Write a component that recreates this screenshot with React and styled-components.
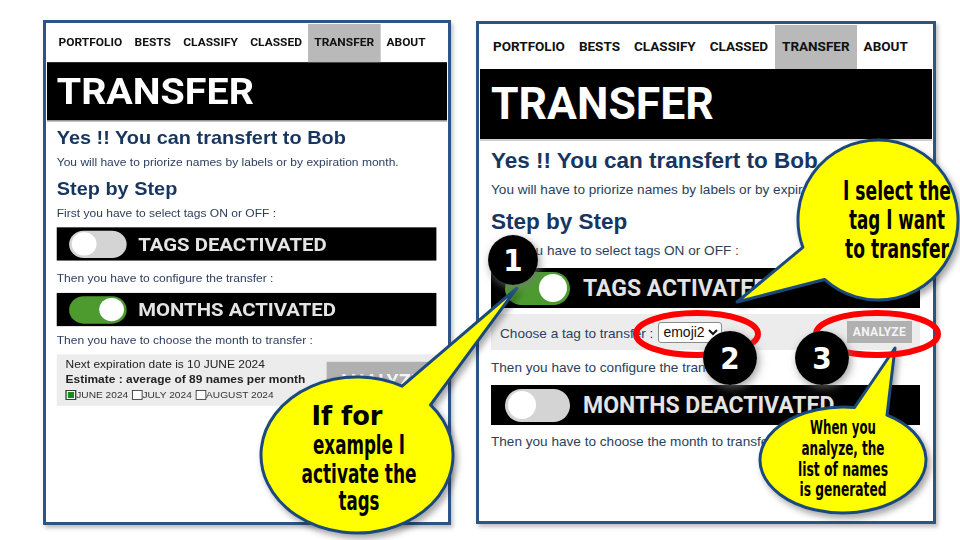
import React from 'react';
import styled, { createGlobalStyle } from 'styled-components';

const Global = createGlobalStyle`
  body {
    margin: 0;
    background: #fff;
    font-family: 'Liberation Sans', Arial, sans-serif;
  }
`;

const Stage = styled.div`
  position: relative;
  width: 960px;
  height: 540px;
  box-sizing: border-box;
  padding: 20px 0 0 43px;
  display: flex;
  align-items: flex-start;
  gap: 25px;
  overflow: hidden;
  background: #fff;
`;

const Frame = styled.div`
  width: ${p => p.$w}px;
  height: ${p => p.$h}px;
  margin-top: ${p => p.$top || 0}px;
  box-sizing: border-box;
  border: 3px solid #2c5585;
  padding: 1px;
  background: #fff;
  overflow: hidden;
  box-shadow: 2px 3px 4px rgba(0, 0, 0, 0.25);
`;

const Scaled = styled.div`
  width: 452px;
  transform: scale(${p => p.$sx}, ${p => p.$sy});
  transform-origin: 0 0;
`;

const Nav = styled.div`
  display: flex;
  height: ${p => p.$h}px;
  padding-left: 6px;
`;

const NavItem = styled.div`
  padding: 0 7px;
  display: flex;
  align-items: center;
  font: 700 13.5px/1 Roboto, sans-serif;
  color: #111;
  background: ${p => (p.$active ? '#b9b9b9' : 'transparent')};
`;

const Header = styled.div`
  height: 70px;
  background: #000;
  border-bottom: 2px solid #cfcfcf;
  padding-left: 11px;
  font: 700 44.5px/70px Roboto, sans-serif;
  color: #fff;
`;

const Body = styled.div`
  padding: 0 12px 0 11px;
`;

const H = styled.div`
  margin-top: ${p => p.$mt}px;
  font: 700 22.5px/24px 'Liberation Sans', Arial, sans-serif;
  color: #17365f;
  white-space: nowrap;
`;

const P = styled.div`
  margin-top: ${p => p.$mt || 9}px;
  font: 13.6px/16px 'Liberation Sans', Arial, sans-serif;
  color: #2c3e5c;
  white-space: nowrap;
`;

const Bar = styled.div`
  margin-top: 9px;
  height: 40px;
  background: #000;
  display: flex;
  align-items: center;
  padding-left: 14px;
  gap: 13px;
  font: 700 23px/1 Roboto, sans-serif;
  color: #e4e4e4;
  white-space: nowrap;
  overflow: hidden;
`;

const Toggle = styled.div`
  width: 65px;
  height: 33px;
  border-radius: 17px;
  background: ${p => (p.$on ? '#4d9b2f' : '#d4d4d4')};
  display: flex;
  align-items: center;
  justify-content: ${p => (p.$on ? 'flex-end' : 'flex-start')};
  padding: 0 3px;
  box-sizing: border-box;
  flex-shrink: 0;
  &::after {
    content: '';
    width: 28px;
    height: 28px;
    border-radius: 50%;
    background: #fff;
  }
`;

const TagRow = styled.div`
  margin-top: 6px;
  height: 36px;
  background: #ececec;
  display: flex;
  align-items: center;
  justify-content: space-between;
  padding: 0 8px 0 9px;
  font: 13.6px 'Liberation Sans', Arial, sans-serif;
  color: #2c3e5c;
`;

const Select = styled.select`
  margin-left: 5px;
  height: 21px;
  font: 14px 'Liberation Sans', Arial, sans-serif;
  color: #111;
  background: #fff;
  border: 1px solid #8a8a8a;
  border-radius: 3px;
`;

const Analyze = styled.div`
  background: #b0b0b0;
  color: #f4f4f4;
  font: 700 ${p => p.$size}px/1.2 Roboto, sans-serif;
  letter-spacing: 0.3px;
  padding: ${p => p.$pad};
  margin: ${p => p.$m || 0};
`;

const MonthBox = styled.div`
  margin-top: 9px;
  height: 62px;
  background: #ececec;
  display: flex;
  justify-content: space-between;
  padding: 4px 0 0 10px;
  box-sizing: border-box;
  color: #222;
`;

const Line = styled.div`
  font: ${p => (p.$bold ? 700 : 400)} 13.5px/18px 'Liberation Sans', Arial, sans-serif;
  white-space: nowrap;
`;

const Checks = styled.div`
  display: flex;
  gap: 4px;
  margin-top: 2px;
  font: 11.5px/14px 'Liberation Sans', Arial, sans-serif;
  color: #333;
`;

const Check = styled.span`
  display: inline-flex;
  align-items: center;
  &::before {
    content: '';
    width: 10px;
    height: 10px;
    border: 1.5px solid #333;
    background: ${p => (p.$on ? '#1a8a1a' : '#fff')};
    box-shadow: ${p => (p.$on ? 'inset 0 0 0 1.5px #fff' : 'none')};
  }
`;

const Overlay = styled.svg`
  position: absolute;
  left: 0;
  top: 0;
  pointer-events: none;
`;

const NAV = ['PORTFOLIO', 'BESTS', 'CLASSIFY', 'CLASSED', 'TRANSFER', 'ABOUT'];

const Screen = ({ tagsOn, monthsOn, navH }) => (
  <>
    <Nav $h={navH}>
      {NAV.map(n => (
        <NavItem key={n} $active={n === 'TRANSFER'}>{n}</NavItem>
      ))}
    </Nav>
    <Header>TRANSFER</Header>
    <Body>
      <H $mt={8}>Yes !! You can transfert to Bob</H>
      <P>You will have to priorize names by labels or by expiration month.</P>
      <H $mt={12}>Step by Step</H>
      <P>First you have to select tags ON or OFF :</P>
      <Bar>
        <Toggle $on={tagsOn} />
        {tagsOn ? 'TAGS ACTIVATED' : 'TAGS DEACTIVATED'}
      </Bar>
      {tagsOn && (
        <TagRow>
          <span>
            Choose a tag to transfer :
            <Select defaultValue="emoji2">
              <option>emoji2</option>
            </Select>
          </span>
          <Analyze $size={12} $pad="4px 6px">ANALYZE</Analyze>
        </TagRow>
      )}
      <P $mt={tagsOn ? 10 : 14}>Then you have to configure the transfer :</P>
      <Bar>
        <Toggle $on={monthsOn} />
        {monthsOn ? 'MONTHS ACTIVATED' : 'MONTHS DEACTIVATED'}
      </Bar>
      <P>Then you have to choose the month to transfer :</P>
      {monthsOn && (
        <MonthBox>
          <div>
            <Line>Next expiration date is 10 JUNE 2024</Line>
            <Line $bold>Estimate : average of 89 names per month</Line>
            <Checks>
              <Check $on>JUNE 2024</Check>
              <Check>JULY 2024</Check>
              <Check>AUGUST 2024</Check>
            </Checks>
          </div>
          <Analyze $size={22} $pad="10px 12px 14px" $m="5px 4px 0 0">
            ANALYZE
          </Analyze>
        </MonthBox>
      )}
    </Body>
  </>
);

const ell = (cx, cy, rx, ry, deg) => {
  const a = (deg * Math.PI) / 180;
  return [cx + rx * Math.cos(a), cy - ry * Math.sin(a)];
};

const bubble = (cx, cy, rx, ry, a1, a2, tip, sweep) => {
  const [x1, y1] = ell(cx, cy, rx, ry, a1);
  const [x2, y2] = ell(cx, cy, rx, ry, a2);
  return `M${x1} ${y1} A${rx} ${ry} 0 1 ${sweep} ${x2} ${y2} L${tip[0]} ${tip[1]} Z`;
};

const CALLOUTS = [
  {
    d: bubble(357, 455, 96, 78, 62, 40, [517, 288], 0),
    size: 27,
    lines: [
      ['If for', 347, 425, 71],
      ['example I', 359, 454, 92],
      ['activate the', 359, 483, 115],
      ['tags', 359, 510, 41],
    ],
  },
  {
    d: bubble(878, 220, 80, 80, 200, 228, [737, 302], 1),
    size: 26,
    lines: [
      ['I select the', 897, 200, 108],
      ['tag I want', 897, 229, 96],
      ['to transfer', 897, 258, 104],
    ],
  },
  {
    d: bubble(843, 460, 83, 53, 82, 58, [895, 348], 0),
    size: 19,
    lines: [
      ['When you', 843, 434, 66],
      ['analyze, the', 843, 455, 83],
      ['list of names', 843, 476, 90],
      ['is generated', 843, 496, 87],
    ],
  },
];

const MARKS = [
  [513, 260, 25, '1'],
  [730, 358, 27, '2'],
  [822, 358, 27, '3'],
];

const calloutFont = "'DejaVu Sans Condensed', 'Liberation Sans Narrow', sans-serif";

const Notes = () => (
  <Overlay width="960" height="540" viewBox="0 0 960 540">
    <defs>
      <filter id="sh" x="-20%" y="-20%" width="140%" height="140%">
        <feDropShadow dx="3" dy="4" stdDeviation="3" floodColor="#000" floodOpacity="0.35" />
      </filter>
      <filter id="glow" x="-40%" y="-40%" width="180%" height="180%">
        <feDropShadow dx="2" dy="3" stdDeviation="4" floodColor="#777" floodOpacity="0.7" />
      </filter>
    </defs>
    {CALLOUTS.map((c, i) => (
      <g key={i}>
        <path d={c.d} fill="#ffff00" stroke="#1f4a7c" strokeWidth="3" strokeLinejoin="round" filter="url(#sh)" />
        {c.lines.map(([t, x, y, w]) => (
          <text
            key={t}
            x={x}
            y={y}
            textAnchor="middle"
            textLength={w}
            lengthAdjust="spacingAndGlyphs"
            fontFamily={calloutFont}
            fontWeight="700"
            fontSize={c.size}
            fill="#000"
          >
            {t}
          </text>
        ))}
      </g>
    ))}
    <ellipse cx="697" cy="334" rx="61" ry="21" fill="none" stroke="#f00" strokeWidth="6" />
    <ellipse cx="877" cy="334" rx="61" ry="21" fill="none" stroke="#f00" strokeWidth="6" />
    {MARKS.map(([x, y, r, n]) => (
      <g key={n}>
        <circle cx={x} cy={y} r={r} fill="#000" filter="url(#glow)" />
        <text
          x={x}
          y={y + 11}
          textAnchor="middle"
          fontFamily={calloutFont}
          fontWeight="700"
          fontSize="31"
          fill="#fff"
        >
          {n}
        </text>
      </g>
    ))}
  </Overlay>
);

export default function App() {
  return (
    <>
      <Global />
      <Stage>
        <Frame $w={408} $h={505}>
          <Scaled $sx={0.885} $sy={0.83}>
            <Screen tagsOn={false} monthsOn navH={46} />
          </Scaled>
        </Frame>
        <Frame $w={460} $h={503} $top={1}>
          <Scaled $sx={1} $sy={1}>
            <Screen tagsOn monthsOn={false} navH={44} />
          </Scaled>
        </Frame>
        <Notes />
      </Stage>
    </>
  );
}
